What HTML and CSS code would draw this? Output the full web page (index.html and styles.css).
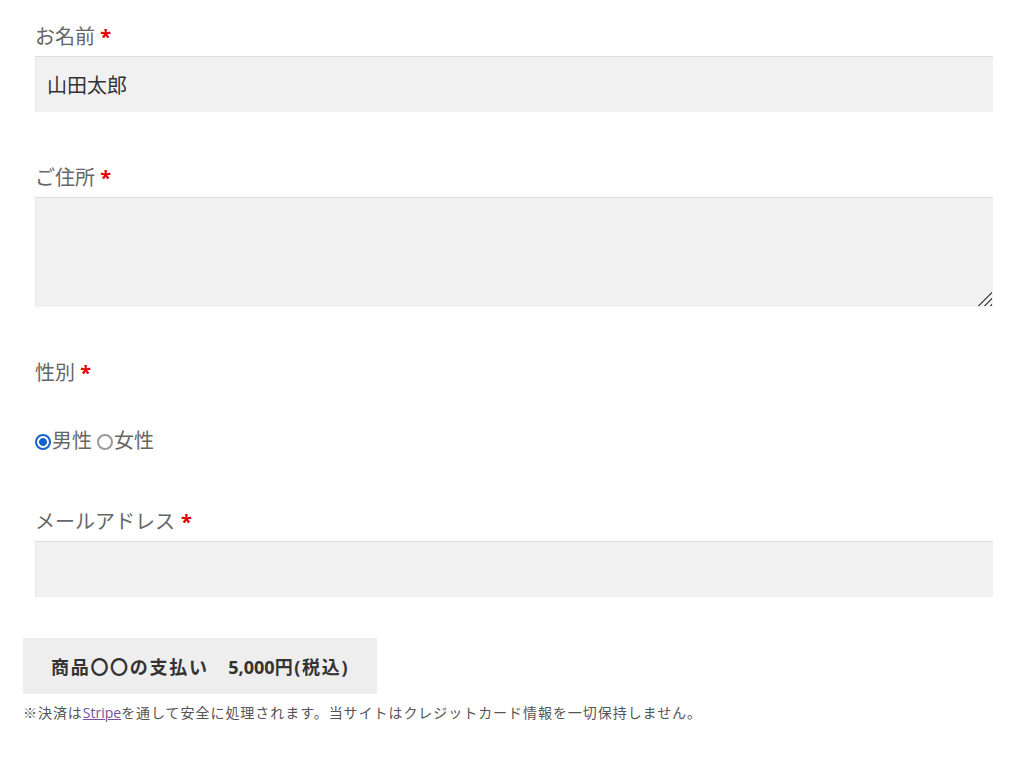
FILE: index.html
```html
<!DOCTYPE html>
<html lang="ja">

<head>
    <meta charset="utf-8">
    <title>お支払いフォーム</title>
    <link rel="stylesheet" href="styles.css">
</head>

<body>
    <form class="order-form">
        <div class="field">
            <label class="field-label" for="name">お名前 <span class="required">*</span></label>
            <input class="field-input" type="text" id="name" value="山田太郎">
        </div>

        <div class="field">
            <label class="field-label" for="address">ご住所 <span class="required">*</span></label>
            <div class="textarea-wrap">
                <textarea class="field-input field-textarea" id="address"></textarea>
            </div>
        </div>

        <div class="field">
            <div class="field-label">性別 <span class="required">*</span></div>
            <div class="radio-group">
                <label class="radio-item"><input type="radio" name="gender" checked>男性</label>
                <label class="radio-item"><input type="radio" name="gender">女性</label>
            </div>
        </div>

        <div class="field">
            <label class="field-label" for="email">メールアドレス<span class="required tight">*</span></label>
            <input class="field-input" type="email" id="email">
        </div>

        <button type="button" class="pay-button">商品〇〇の支払い　<span class="latin">5,000</span>円(税込)</button>
        <p class="pay-note">※決済は<a href="#" class="latin">Stripe</a>を通して安全に処理されます。当サイトはクレジットカード情報を一切保持しません。</p>
    </form>
</body>

</html>
```

FILE: styles.css
```css
body {
    margin: 0;
    padding: 22px 18px 0 23px;
    font-family: "Open Sans", "Noto Sans CJK JP", sans-serif;
    color: #666;
    background-color: #ffffff;
}

/* 入力項目 */
.field {
    padding: 0 12px;
    margin-bottom: 51px;
}

.field-label {
    display: block;
    font-size: 20px;
    line-height: 30px;
    margin-bottom: 4px;
}

.required {
    color: #e00000;
    font-weight: bold;
}

.required.tight {
    margin-left: 6px;
}

.field-input {
    display: block;
    width: 100%;
    box-sizing: border-box;
    height: 56px;
    padding: 0 12px;
    font-family: inherit;
    font-size: 20px;
    color: #333;
    background-color: #f1f1f1;
    border: none;
    border-top: 1px solid #dcdcdc;
    box-shadow: inset 1px 0 0 #e6e6e6;
    outline: none;
}

.textarea-wrap {
    position: relative;
}

.field-textarea {
    height: 110px;
    resize: none;
}

/* リサイズのつまみ */
.textarea-wrap::after {
    content: '';
    position: absolute;
    right: 1px;
    bottom: 1px;
    width: 18px;
    height: 18px;
    background: repeating-linear-gradient(135deg, transparent 0 2.8px, #5a5a5a 2.8px 4.2px);
    clip-path: polygon(100% 0, 100% 100%, 0 100%);
}

/* ラジオボタン */
.radio-group {
    display: flex;
    margin-top: 38px;
    font-size: 20px;
    line-height: 30px;
}

.radio-item {
    display: flex;
    align-items: center;
    margin-right: 5px;
}

.radio-item input {
    appearance: none;
    box-sizing: border-box;
    margin: 1px 1px 0 0;
    width: 16px;
    height: 16px;
    border: 2px solid #9a9a9a;
    border-radius: 50%;
    background-color: #fff;
}

.radio-item input:checked {
    border-color: #1565c8;
    background: radial-gradient(circle, #1565c8 0 3.6px, #fff 4.2px);
}

/* 支払いボタン */
.pay-button {
    display: block;
    margin-top: -10px;
    height: 56px;
    padding: 0 28px;
    font-family: inherit;
    font-size: 18px;
    font-weight: bold;
    letter-spacing: 1.7px;
    color: #333;
    background-color: #eeeeee;
    border: none;
    cursor: pointer;
}

.latin {
    letter-spacing: 0;
}

.pay-note {
    margin: 8px 0 0;
    font-size: 14px;
    line-height: 21px;
    letter-spacing: 0.95px;
    color: #555;
}

.pay-note a {
    color: #7a4e9c;
}
```
